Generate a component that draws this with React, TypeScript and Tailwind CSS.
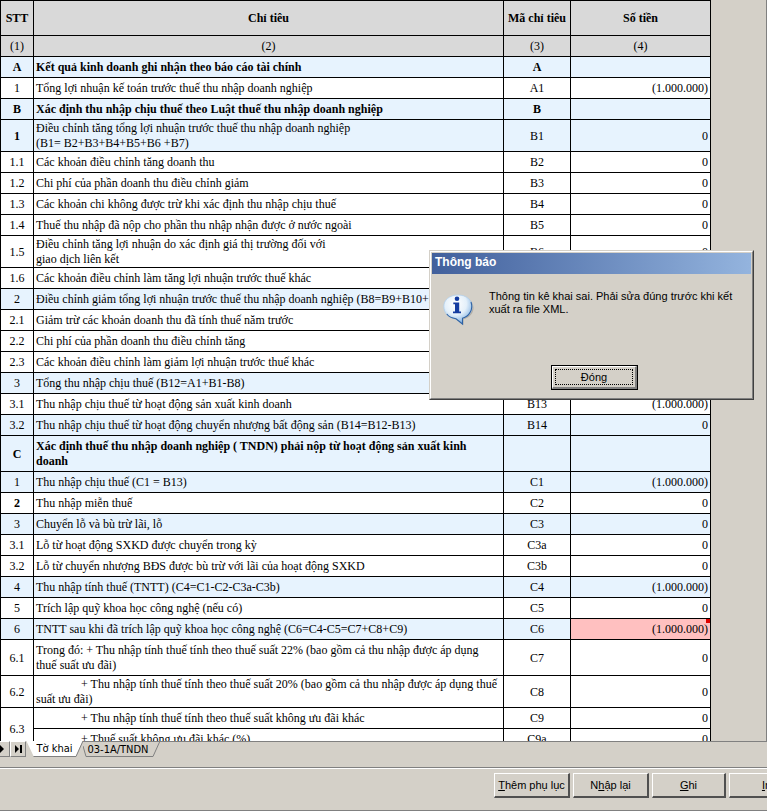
import React from "react";
import clsx from "clsx";

type Row = {
  no?: string;
  boldNo?: boolean;
  span?: number;
  label: string[];
  code?: string;
  amount?: string;
  shaded?: boolean;
  bold?: boolean;
  indent?: boolean;
  error?: boolean;
  size?: "normal" | "double" | "tall";
};

const rows: Row[] = [
  { no: "A", label: ["Kết quả kinh doanh ghi nhận theo báo cáo tài chính"], code: "A", bold: true, shaded: true },
  { no: "1", label: ["Tổng lợi nhuận kế toán trước thuế thu nhập doanh nghiệp"], code: "A1", amount: "(1.000.000)" },
  { no: "B", label: ["Xác định thu nhập chịu thuế theo Luật thuế thu nhập doanh nghiệp"], code: "B", bold: true, shaded: true },
  { no: "1", boldNo: true, label: ["Điều chỉnh tăng tổng lợi nhuận trước thuế thu nhập doanh nghiệp", "(B1= B2+B3+B4+B5+B6 +B7)"], code: "B1", amount: "0", shaded: true, size: "double" },
  { no: "1.1", label: ["Các khoản điều chỉnh tăng doanh thu"], code: "B2", amount: "0" },
  { no: "1.2", label: ["Chi phí của phần doanh thu điều chỉnh giảm"], code: "B3", amount: "0" },
  { no: "1.3", label: ["Các khoản chi không được trừ khi xác định thu nhập chịu thuế"], code: "B4", amount: "0" },
  { no: "1.4", label: ["Thuế thu nhập đã nộp cho phần thu nhập nhận được ở nước ngoài"], code: "B5", amount: "0" },
  { no: "1.5", label: ["Điều chỉnh tăng lợi nhuận do xác định giá thị trường đối với", "giao dịch liên kết"], code: "B6", amount: "0", size: "double" },
  { no: "1.6", label: ["Các khoản điều chỉnh làm tăng lợi nhuận trước thuế khác"], code: "B7", amount: "0" },
  { no: "2", label: ["Điều chỉnh giảm tổng lợi nhuận trước thuế thu nhập doanh nghiệp (B8=B9+B10+B11)"], code: "B8", amount: "0", shaded: true },
  { no: "2.1", label: ["Giảm trừ các khoản doanh thu đã tính thuế năm trước"], code: "B9", amount: "0" },
  { no: "2.2", label: ["Chi phí của phần doanh thu điều chỉnh tăng"], code: "B10", amount: "0" },
  { no: "2.3", label: ["Các khoản điều chỉnh làm giảm lợi nhuận trước thuế khác"], code: "B11", amount: "0" },
  { no: "3", label: ["Tổng thu nhập chịu thuế (B12=A1+B1-B8)"], code: "B12", amount: "(1.000.000)", shaded: true },
  { no: "3.1", label: ["Thu nhập chịu thuế từ hoạt động sản xuất kinh doanh"], code: "B13", amount: "(1.000.000)" },
  { no: "3.2", label: ["Thu nhập chịu thuế từ hoạt động chuyển nhượng bất động sản (B14=B12-B13)"], code: "B14", amount: "0", shaded: true },
  { no: "C", label: ["Xác định thuế thu nhập doanh nghiệp ( TNDN) phải nộp từ hoạt động sản xuất kinh", "doanh"], bold: true, shaded: true, size: "tall" },
  { no: "1", label: ["Thu nhập chịu thuế (C1 = B13)"], code: "C1", amount: "(1.000.000)", shaded: true },
  { no: "2", boldNo: true, label: ["Thu nhập miễn thuế"], code: "C2", amount: "0" },
  { no: "3", label: ["Chuyển lỗ và bù trừ lãi, lỗ"], code: "C3", amount: "0", shaded: true },
  { no: "3.1", label: ["Lỗ từ hoạt động SXKD được chuyển trong kỳ"], code: "C3a", amount: "0" },
  { no: "3.2", label: ["Lỗ từ chuyển nhượng BĐS được bù trừ với lãi của hoạt động SXKD"], code: "C3b", amount: "0" },
  { no: "4", label: ["Thu nhập tính thuế (TNTT) (C4=C1-C2-C3a-C3b)"], code: "C4", amount: "(1.000.000)", shaded: true },
  { no: "5", label: ["Trích lập quỹ khoa học công nghệ (nếu có)"], code: "C5", amount: "0" },
  { no: "6", label: ["TNTT sau khi đã trích lập quỹ khoa học công nghệ (C6=C4-C5=C7+C8+C9)"], code: "C6", amount: "(1.000.000)", shaded: true, error: true },
  { no: "6.1", label: ["Trong đó: + Thu nhập tính thuế tính theo thuế suất 22% (bao gồm cả thu nhập được áp dụng", "thuế suất ưu đãi)"], code: "C7", amount: "0", size: "tall" },
  { no: "6.2", label: ["+ Thu nhập tính thuế tính theo thuế suất 20% (bao gồm cả thu nhập được áp dụng thuế", "suất ưu đãi)"], code: "C8", amount: "0", indent: true, size: "double" },
  { no: "6.3", span: 2, label: ["+ Thu nhập tính thuế tính theo thuế suất không ưu đãi khác"], code: "C9", amount: "0", indent: true },
  { label: ["+ Thuế suất không ưu đãi khác (%)"], code: "C9a", amount: "0", indent: true },
];

const heights = { normal: "h-[21px]", double: "h-[32px]", tall: "h-[36px]" };
const cell = "border-r border-b border-black p-0 pt-px leading-[15px] whitespace-nowrap";

function TaxTable() {
  return (
    <table className="w-full table-fixed border-separate border-spacing-0 border-t border-l border-black bg-white font-['Liberation_Serif','Times_New_Roman',serif] text-[12px] text-black">
      <colgroup>
        <col className="w-[33px]" />
        <col />
        <col className="w-[67px]" />
        <col className="w-[140px]" />
      </colgroup>
      <thead className="bg-[#d9d9d9]">
        <tr className="h-[35px]">
          {["STT", "Chỉ tiêu", "Mã chỉ tiêu", "Số tiền"].map((title) => (
            <th key={title} className={clsx(cell, "font-bold")}>{title}</th>
          ))}
        </tr>
        <tr className="h-[21px]">
          {["(1)", "(2)", "(3)", "(4)"].map((title) => (
            <th key={title} className={clsx(cell, "font-normal")}>{title}</th>
          ))}
        </tr>
      </thead>
      <tbody>
        {rows.map((row, i) => (
          <tr key={i} className={clsx(heights[row.size ?? "normal"], row.shaded && "bg-[#e7f3fe]", row.bold && "font-bold")}>
            {row.no && (
              <td rowSpan={row.span} className={clsx(cell, "text-center", row.boldNo && "font-bold")}>{row.no}</td>
            )}
            <td className={clsx(cell, "pl-[2px]", row.indent && "indent-[45px]")}>
              {row.label.map((line, n) => (
                <React.Fragment key={n}>
                  {n > 0 && <br />}
                  {line}
                </React.Fragment>
              ))}
            </td>
            <td className={clsx(cell, "text-center")}>{row.code}</td>
            <td className={clsx(cell, "relative pr-[2px] text-right", row.error && "bg-[#ffc0c0]")}>
              {row.amount}
              {row.error && <span className="absolute top-0 right-0 size-1 bg-[#e00000]" />}
            </td>
          </tr>
        ))}
      </tbody>
    </table>
  );
}

function SheetTabs() {
  return (
    <nav className="flex h-[26px] shrink-0 items-start bg-[#d4d0c8] font-['DejaVu_Sans_Condensed','Tahoma',sans-serif] text-[11px] leading-[16px] text-black">
      <button aria-label="Trang sau" className="flex h-4 w-[10px] items-center justify-start border-t border-r border-b border-t-white border-r-[#808080] border-b-[#808080]">
        <svg width="5" height="8" viewBox="0 0 5 8"><path d="M0 0L4 4L0 8Z" /></svg>
      </button>
      <button aria-label="Trang cuối" className="flex h-4 w-4 items-center justify-center border-t border-r border-b border-l border-t-white border-r-[#808080] border-b-[#808080] border-l-white">
        <svg width="7" height="8" viewBox="0 0 7 8"><path d="M0 0L4 4L0 8ZM5 0H7V8H5Z" /></svg>
      </button>
      <button className="relative z-10 h-4 w-[57px] text-center">
        <svg className="absolute inset-0" width="57" height="16" viewBox="0 0 57 16">
          <path d="M0 -1L7.500 15H50L57 -1Z" fill="#fff" />
          <path d="M7.500 15.500H50L57 0" fill="none" stroke="#808080" />
        </svg>
        <span className="relative">Tờ khai</span>
      </button>
      <button className="relative h-4 w-[78px] border-t border-[#808080] pr-2 text-center">
        <svg className="absolute -top-px left-0" width="78" height="16" viewBox="0 0 78 16">
          <path d="M0 5L3 15.500H70L77 0" fill="none" stroke="#808080" />
        </svg>
        <span className="relative">03-1A/TNDN</span>
      </button>
      <div className="flex-1 border-t border-[#808080]" />
    </nav>
  );
}

function ToolButton({ className, children }: { className: string; children: React.ReactNode }) {
  return (
    <button className={clsx("h-[25px] shrink-0 border-t border-l border-r-2 border-b-2 border-t-white border-l-white border-r-[#505050] border-b-[#505050] whitespace-nowrap", className)}>
      {children}
    </button>
  );
}

function InfoIcon() {
  return (
    <svg width="32" height="32" viewBox="0 0 32 32" className="mt-1 shrink-0" aria-hidden="true">
      <defs>
        <radialGradient id="balloon" cx="0.42" cy="0.3" r="0.7">
          <stop offset="0" stopColor="#ffffff" />
          <stop offset="0.55" stopColor="#e4f0fa" />
          <stop offset="1" stopColor="#7fb0e2" />
        </radialGradient>
      </defs>
      <path d="M16 2C24.500 2 30.500 7.500 30.500 14C30.500 19 27 23.500 20.500 25.200V31L13.500 25.500C6 24.500 1.500 19.500 1.500 14C1.500 7.500 8 2 16 2Z" fill="#8f8b85" opacity="0.5" />
      <path d="M15 1C23.500 1 29 6 29 12.500C29 18.300 25.500 22.500 19.500 24.300V30L13 24.700C5.500 24 0.800 18.800 0.800 12.500C0.800 6 6.500 1 15 1Z" fill="url(#balloon)" stroke="#b4d0ec" strokeWidth="0.8" />
      <path d="M28 8C30.500 15 26.500 22.500 19.500 24.300V30L13 24.700C9.500 24.200 6 23 3.800 20" fill="none" stroke="#2f62a4" strokeWidth="1.100" />
      <circle cx="14" cy="4.800" r="2.300" fill="#143ca0" />
      <path d="M10.300 8.500H16.200V17.500H18V19.300H10V17.500H12V10.300H10.300Z" fill="#143ca0" />
    </svg>
  );
}

function MessageDialog() {
  return (
    <div role="dialog" aria-labelledby="dialog-title" className="absolute top-[250px] right-[13px] flex h-[150px] w-[325px] flex-col border border-t-[#d4d0c8] border-r-[#404040] border-b-[#404040] border-l-[#d4d0c8] bg-[#d4d0c8] text-black">
      <div className="flex flex-1 flex-col border border-t-white border-r-[#808080] border-b-[#808080] border-l-white p-px">
        <h2 id="dialog-title" className="h-[21px] bg-linear-to-r from-[#42609c] to-[#94b4de] pl-[3px] text-[12px] leading-[18px] font-bold text-white">Thông báo</h2>
        <div className="flex flex-1 gap-[14px] pt-[16px] pl-[11px]">
          <InfoIcon />
          <p className="text-[11px] leading-[13px] whitespace-nowrap">
            Thông tin kê khai sai. Phải sửa đúng trước khi kết
            <br />
            xuất ra file XML.
          </p>
        </div>
        <div className="flex justify-center pb-[7px] pl-[6px]">
          <button className="h-[25px] w-[87px] border border-black">
            <span className="flex h-full border-t border-l border-r-2 border-b-2 border-t-white border-l-white border-r-[#808080] border-b-[#808080] p-[2px]">
              <span className="flex flex-1 items-center justify-center border border-dotted border-black">Đóng</span>
            </span>
          </button>
        </div>
      </div>
    </div>
  );
}

export default function App() {
  return (
    <div className="relative flex h-screen flex-col overflow-hidden bg-[#d4d0c8] font-['Liberation_Sans','Arial',sans-serif] text-[11px]">
      <main className="min-h-0 flex-1 overflow-hidden border-r border-[#808080] pr-[55px]">
        <TaxTable />
      </main>
      <SheetTabs />
      <footer className="flex h-11 shrink-0 justify-end gap-[3px] overflow-hidden border-y border-[#808080] pt-[5px] shadow-[inset_0_1px_0_#ffffff]">
        <ToolButton className="w-[76px]"><u>T</u>hêm phụ lục</ToolButton>
        <ToolButton className="w-[76px]">N<u>h</u>ập lại</ToolButton>
        <ToolButton className="w-[74px]"><u>G</u>hi</ToolButton>
        <ToolButton className="-mr-[38px] w-[76px]"><u>I</u>n</ToolButton>
      </footer>
      <MessageDialog />
    </div>
  );
}
